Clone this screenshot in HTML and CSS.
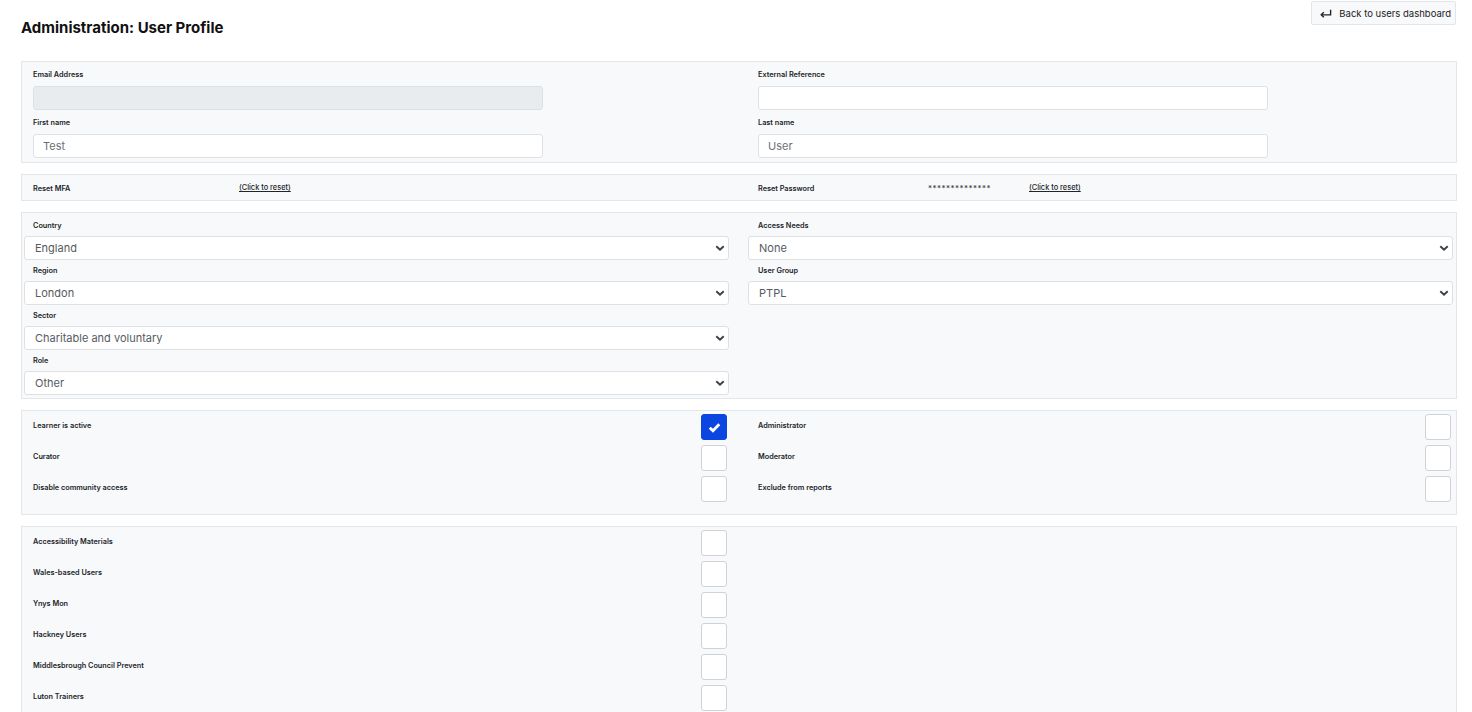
FILE: index.html
```html
<!DOCTYPE html>
<html lang="en">
<head>
<meta charset="utf-8">
<title>Administration: User Profile</title>
<link rel="stylesheet" href="styles.css">
</head>
<body>
<div class="page">
  <header class="page-header">
    <h1 class="page-title">Administration: User Profile</h1>
    <button class="back-btn" type="button">
      <svg class="back-icon" viewBox="0 0 14 10" width="13" height="10" aria-hidden="true">
        <path d="M12.5 1.5 V7 H2.5" fill="none" stroke="currentColor" stroke-width="1.5"/>
        <path d="M5.2 4.3 L2.4 7 L5.2 9.7" fill="none" stroke="currentColor" stroke-width="1.5"/>
      </svg>
      <span>Back to users dashboard</span>
    </button>
  </header>

  <!-- Identity -->
  <section class="panel panel-identity">
    <div class="cols">
      <div class="col">
        <div class="field field-narrow">
          <label class="label">Email Address</label>
          <input class="input input-disabled" type="text" disabled>
        </div>
        <div class="field field-narrow">
          <label class="label">First name</label>
          <input class="input" type="text" value="Test">
        </div>
      </div>
      <div class="col">
        <div class="field field-narrow field-right">
          <label class="label">External Reference</label>
          <input class="input" type="text">
        </div>
        <div class="field field-narrow field-right">
          <label class="label">Last name</label>
          <input class="input" type="text" value="User">
        </div>
      </div>
    </div>
  </section>

  <!-- Resets -->
  <section class="panel panel-reset">
    <div class="cols">
      <div class="col reset-row">
        <span class="label reset-label-mfa">Reset MFA</span>
        <a class="reset-link" href="#">(Click to reset)</a>
      </div>
      <div class="col reset-row reset-row-right">
        <span class="label reset-label-pw">Reset Password</span>
        <span class="stars">**************</span>
        <a class="reset-link" href="#">(Click to reset)</a>
      </div>
    </div>
  </section>

  <!-- Demographics -->
  <section class="panel panel-selects">
    <div class="cols">
      <div class="col">
        <div class="field">
          <label class="label label-indent">Country</label>
          <div class="select-wrap">
            <select class="select"><option>England</option></select>
            <svg class="chevron" viewBox="0 0 10 6" width="10" height="6" aria-hidden="true"><path d="M1.3 1.2 L5 4.6 L8.7 1.2" fill="none" stroke="currentColor" stroke-width="1.9"/></svg>
          </div>
        </div>
        <div class="field">
          <label class="label label-indent">Region</label>
          <div class="select-wrap">
            <select class="select"><option>London</option></select>
            <svg class="chevron" viewBox="0 0 10 6" width="10" height="6" aria-hidden="true"><path d="M1.3 1.2 L5 4.6 L8.7 1.2" fill="none" stroke="currentColor" stroke-width="1.9"/></svg>
          </div>
        </div>
        <div class="field">
          <label class="label label-indent">Sector</label>
          <div class="select-wrap">
            <select class="select"><option>Charitable and voluntary</option></select>
            <svg class="chevron" viewBox="0 0 10 6" width="10" height="6" aria-hidden="true"><path d="M1.3 1.2 L5 4.6 L8.7 1.2" fill="none" stroke="currentColor" stroke-width="1.9"/></svg>
          </div>
        </div>
        <div class="field">
          <label class="label label-indent">Role</label>
          <div class="select-wrap">
            <select class="select"><option>Other</option></select>
            <svg class="chevron" viewBox="0 0 10 6" width="10" height="6" aria-hidden="true"><path d="M1.3 1.2 L5 4.6 L8.7 1.2" fill="none" stroke="currentColor" stroke-width="1.9"/></svg>
          </div>
        </div>
      </div>
      <div class="col">
        <div class="field">
          <label class="label label-indent-r">Access Needs</label>
          <div class="select-wrap">
            <select class="select"><option>None</option></select>
            <svg class="chevron" viewBox="0 0 10 6" width="10" height="6" aria-hidden="true"><path d="M1.3 1.2 L5 4.6 L8.7 1.2" fill="none" stroke="currentColor" stroke-width="1.9"/></svg>
          </div>
        </div>
        <div class="field">
          <label class="label label-indent-r">User Group</label>
          <div class="select-wrap">
            <select class="select"><option>PTPL</option></select>
            <svg class="chevron" viewBox="0 0 10 6" width="10" height="6" aria-hidden="true"><path d="M1.3 1.2 L5 4.6 L8.7 1.2" fill="none" stroke="currentColor" stroke-width="1.9"/></svg>
          </div>
        </div>
      </div>
    </div>
  </section>

  <!-- Permissions -->
  <section class="panel panel-checks">
    <div class="cols">
      <div class="col">
        <div class="check-row">
          <span class="label">Learner is active</span>
          <span class="checkbox checked">
            <svg viewBox="0 0 12 10" width="13" height="11" aria-hidden="true"><path d="M1.6 5.2 L4.6 8 L10.4 2" fill="none" stroke="#fff" stroke-width="2.6"/></svg>
          </span>
        </div>
        <div class="check-row">
          <span class="label">Curator</span>
          <span class="checkbox"></span>
        </div>
        <div class="check-row">
          <span class="label">Disable community access</span>
          <span class="checkbox"></span>
        </div>
      </div>
      <div class="col col-right">
        <div class="check-row">
          <span class="label">Administrator</span>
          <span class="checkbox"></span>
        </div>
        <div class="check-row">
          <span class="label">Moderator</span>
          <span class="checkbox"></span>
        </div>
        <div class="check-row">
          <span class="label">Exclude from reports</span>
          <span class="checkbox"></span>
        </div>
      </div>
    </div>
  </section>

  <!-- Groups -->
  <section class="panel panel-checks">
    <div class="cols">
      <div class="col">
        <div class="check-row"><span class="label">Accessibility Materials</span><span class="checkbox"></span></div>
        <div class="check-row"><span class="label">Wales-based Users</span><span class="checkbox"></span></div>
        <div class="check-row"><span class="label">Ynys Mon</span><span class="checkbox"></span></div>
        <div class="check-row"><span class="label">Hackney Users</span><span class="checkbox"></span></div>
        <div class="check-row"><span class="label">Middlesbrough Council Prevent</span><span class="checkbox"></span></div>
        <div class="check-row"><span class="label">Luton Trainers</span><span class="checkbox"></span></div>
      </div>
      <div class="col"></div>
    </div>
  </section>
</div>
</body>
</html>
```

FILE: styles.css
```css
* { box-sizing: border-box; }

html, body {
  margin: 0;
  background: #ffffff;
}

body {
  font-family: Inter, "Noto Sans", "Liberation Sans", sans-serif;
  color: #212529;
}

.page {
  padding: 1px 15px 0 21px;
}

/* Header */
.page-header {
  display: flex;
  justify-content: space-between;
  align-items: flex-start;
  margin-bottom: 23px;
}

.page-title {
  margin: 17px 0 0;
  font-size: 15px;
  line-height: 20px;
  font-weight: 700;
  color: #111;
}

.back-btn {
  display: flex;
  align-items: center;
  gap: 7px;
  height: 24px;
  margin-right: 1px;
  padding: 0 4px 0 7px;
  background: #f8f9fa;
  border: 1px solid #e2e5e9;
  border-radius: 2px;
  font-family: inherit;
  font-size: 9.5px;
  color: #222;
  cursor: pointer;
}

.back-icon {
  display: block;
  color: #222;
}

/* Panels */
.panel {
  background: #f8f9fb;
  border: 1px solid #e3e6ea;
  margin-bottom: 11px;
  padding: 0 3px 0 2px;
}

.cols {
  display: grid;
  grid-template-columns: 1fr 1fr;
  column-gap: 19px;
}

.col {
  display: flex;
  flex-direction: column;
  min-width: 0;
}

.label {
  display: block;
  font-size: 7.3px;
  line-height: 11px;
  font-weight: 600;
  color: #212529;
  white-space: nowrap;
}

.label-indent { margin-left: 9px; }
.label-indent-r { margin-left: 10px; }

/* Text inputs */
.panel-identity {
  padding-top: 7px;
  padding-bottom: 4px;
}

.field-narrow {
  margin-left: 9px;
  width: 510px;
}

.field-narrow.field-right { margin-left: 10px; }

.field-narrow + .field-narrow { margin-top: 7px; }

.field-narrow .label { margin-bottom: 6px; }

.input {
  display: block;
  width: 100%;
  height: 24px;
  padding: 0 9px;
  border: 1px solid #dde1e6;
  border-radius: 3px;
  background: #fff;
  font-family: inherit;
  font-size: 11px;
  color: #6b7178;
  outline: none;
}

.input-disabled {
  background: #e9ecef;
}

/* Reset rows */
.panel-reset {
  padding-top: 8px;
  padding-bottom: 7px;
}

.reset-row {
  flex-direction: row;
  align-items: center;
  height: 10px;
  padding-left: 9px;
}

.reset-row-right { padding-left: 10px; }

.reset-label-mfa { width: 206px; }
.reset-label-pw { width: 170px; }

.stars {
  width: 101px;
  font-size: 8px;
  line-height: 10px;
  color: #333;
  letter-spacing: 0.5px;
}

.reset-link {
  font-size: 7.4px;
  line-height: 10px;
  font-weight: 500;
  color: #212529;
  text-decoration: underline;
}

/* Selects */
.panel-selects {
  padding-top: 7px;
  padding-bottom: 3px;
}

.panel-selects .field + .field { margin-top: 5px; }

.panel-selects .label { margin-bottom: 5px; }

.select-wrap {
  position: relative;
}

.select {
  display: block;
  width: 100%;
  height: 24px;
  padding: 0 24px 0 10px;
  border: 1px solid #dde1e6;
  border-radius: 3px;
  background: #fff;
  font-family: inherit;
  font-size: 11px;
  color: #555b61;
  appearance: none;
  -webkit-appearance: none;
  outline: none;
}

.chevron {
  position: absolute;
  right: 4px;
  top: 9px;
  color: #3a3f44;
  pointer-events: none;
}

/* Checkbox rows */
.panel-checks {
  padding-top: 3px;
  padding-bottom: 7px;
}

.check-row {
  display: flex;
  align-items: center;
  justify-content: space-between;
  height: 26px;
  padding: 0 2px 0 9px;
  margin-bottom: 5px;
}

.check-row .label { padding-bottom: 3px; }

.col-right .check-row { padding-left: 10px; }

.checkbox {
  display: flex;
  align-items: center;
  justify-content: center;
  width: 26px;
  height: 26px;
  border: 1px solid #cfd3d8;
  border-radius: 3px;
  background: #fff;
}

.checkbox.checked {
  background: #0a46df;
  border-color: #0a46df;
}

.checkbox svg { display: block; }
```
